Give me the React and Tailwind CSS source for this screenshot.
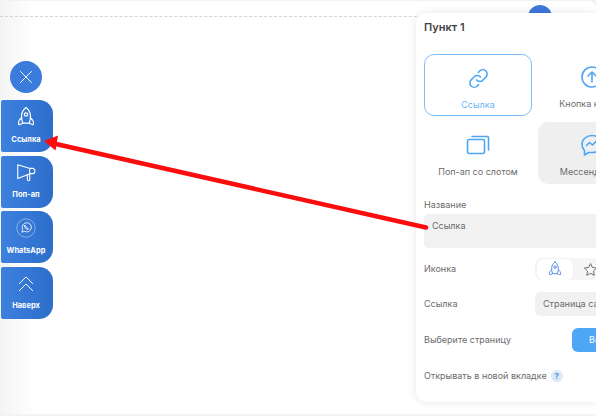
import React from "react";

const Rocket = ({ className }) => (
  <svg viewBox="0 0 24 24" fill="none" stroke="currentColor" strokeWidth="1.2" strokeLinecap="round" strokeLinejoin="round" className={className}>
    <path d="M12 2.500c-3.200 2.400-4.500 5.800-4.500 9 0 2.500.6 4.800 1.300 6.700h6.400c.7-1.900 1.300-4.200 1.300-6.700 0-3.200-1.300-6.600-4.500-9z" />
    <circle cx="12" cy="9.500" r="1.700" />
    <path d="M7.700 12.800c-2 1.300-3.200 3.300-3.200 5.900 0 .8.600 1.200 1.300.8l3-1.300" />
    <path d="M16.300 12.800c2 1.300 3.200 3.300 3.200 5.900 0 .8-.6 1.200-1.300.8l-3-1.300" />
  </svg>
);

const Megaphone = ({ className }) => (
  <svg viewBox="0 0 24 24" fill="none" stroke="currentColor" strokeWidth="1.2" strokeLinecap="round" strokeLinejoin="round" className={className}>
    <path d="M3 3v15l13.500-5.300h2.700a2.500 2.500 0 0 0 2.500-2.500V9.500A2.500 2.500 0 0 0 19.200 7h-2.700L3 3z" />
    <path d="M16.500 7c-1 1.800-1 3.900 0 5.700" />
    <path d="M13.500 14v5.200a1.300 1.300 0 0 0 2.600 0V12.800" />
  </svg>
);

const WhatsApp = ({ className }) => (
  <svg viewBox="0 0 24 24" fill="none" stroke="currentColor" className={className}>
    <circle cx="12" cy="12" r="11" strokeWidth="0.5" />
    <path strokeWidth="1" strokeLinejoin="round" d="M7 17l1-3.400A5.500 5.500 0 1 1 10.300 16L7 17z" />
    <path strokeWidth="1" strokeLinecap="round" d="M10.200 9.500c-.4 1.800 2.200 4.500 4.300 4.300l.6-1.100-1.300-.7-.6.500c-.7-.3-1.200-.8-1.500-1.500l.5-.6-.7-1.300-1.300.4z" />
  </svg>
);

const Chevrons = ({ className }) => (
  <svg viewBox="0 0 24 24" fill="none" stroke="currentColor" strokeWidth="1.200" strokeLinecap="round" strokeLinejoin="round" className={className}>
    <path d="M4 11.500 12 3.500l8 8" />
    <path d="M4 20l8-8 8 8" />
  </svg>
);

const Tile = ({ icon, label }) => (
  <div className="ml-px flex h-[52px] w-[52px] flex-col items-center rounded-r-[14px] rounded-l-[2px] bg-gradient-to-r from-[#3d80dd] to-[#2d6ecb] pr-[2px] text-white">
    <div className="flex h-[32px] w-full items-center justify-center pt-[2px]">{icon}</div>
    <div className="mt-[2.500px] whitespace-nowrap text-[7.500px] font-bold leading-[10px] text-white">{label}</div>
  </div>
);

const Option = ({ icon, label, className }) => (
  <div className={`flex h-[62px] w-[108px] shrink-0 flex-col items-center rounded-[10px] pt-[10px] ${className}`}>
    <div className="flex h-[26px] items-center justify-center">{icon}</div>
    <div className="mt-[8px] whitespace-nowrap text-[9px] leading-[12px]">{label}</div>
  </div>
);

const Row = ({ label, children, className }) => (
  <div className={`flex items-center ${className}`}>
    <div className="w-[111px] shrink-0 text-[9px] text-[#6b6b6b]">{label}</div>
    {children}
  </div>
);

export default function App() {
  return (
    <div className="relative flex h-[416px] w-[596px] overflow-hidden bg-[#f3f3f3] font-['Inter',sans-serif]">
      <div className="relative mb-[2px] mt-[1px] flex w-full rounded-t-[8px] bg-gradient-to-r from-[#f4f4f4] via-white via-[6%] to-white">
        <div className="absolute left-0 right-0 top-[15px] border-t border-dashed border-[#d4d4d4]" />
        <div className="absolute left-[528px] top-[4px] h-[24px] w-[24px] rounded-full bg-[#3d78dc]" />

        <div className="flex w-[416px] shrink-0 flex-col pt-[60px]">
          <div className="ml-[10px] flex h-[32px] w-[32px] items-center justify-center rounded-full bg-[#3b7bdc] text-white">
            <svg viewBox="0 0 16 16" className="h-[16px] w-[16px]" fill="none" stroke="currentColor" strokeWidth="1" strokeLinecap="round">
              <path d="M2.500 2.500l11 11M13.500 2.500l-11 11" />
            </svg>
          </div>
          <div className="mt-[7px] flex flex-col gap-[3.500px]">
            <Tile icon={<Rocket className="h-[24px] w-[24px]" />} label="Ссылка" />
            <Tile icon={<Megaphone className="h-[22px] w-[22px]" />} label="Поп-ап" />
            <Tile icon={<WhatsApp className="h-[20px] w-[20px]" />} label="WhatsApp" />
            <Tile icon={<Chevrons className="h-[20px] w-[20px]" />} label="Наверх" />
          </div>
        </div>

        <div className="relative mt-[12px] h-[389px] w-[200px] overflow-hidden rounded-l-[10px] bg-white pl-[8px] shadow-[0_0_8px_rgba(0,0,0,0.1)]">
          <div className="pt-[7px] text-[11px] font-semibold leading-[14px] text-[#444]">Пункт 1</div>
          <div className="mt-[20px] flex w-[300px] flex-wrap gap-[6px]">
            <Option
              className="border border-[#7cc0fb] text-[#6bb5f5]"
              label="Ссылка"
              icon={
                <svg viewBox="0 0 24 24" fill="none" stroke="#4da6f5" strokeWidth="1.600" strokeLinecap="round" strokeLinejoin="round" className="h-[23px] w-[23px]">
                  <path d="M10 13.500a4.500 4.500 0 0 0 6.400.4l3.300-3.300a4.500 4.500 0 0 0-6.400-6.400l-1.400 1.400" />
                  <path d="M14 10.500a4.500 4.500 0 0 0-6.400-.4l-3.300 3.300a4.500 4.500 0 0 0 6.400 6.400l1.400-1.400" />
                </svg>
              }
            />
            <Option
              className="text-[#6b6b6b]"
              label="Кнопка наверх"
              icon={
                <svg viewBox="0 0 24 24" fill="none" stroke="#4da6f5" strokeWidth="1.600" strokeLinecap="round" strokeLinejoin="round" className="h-[24px] w-[24px]">
                  <circle cx="12" cy="12" r="10" />
                  <path d="M12 17V7.500M8 11l4-4 4 4" />
                </svg>
              }
            />
            <Option
              className="text-[#6b6b6b]"
              label="Поп-ап со слотом"
              icon={
                <svg viewBox="0 0 24 24" fill="none" stroke="#4da6f5" strokeWidth="1.600" strokeLinejoin="round" className="h-[24px] w-[24px]">
                  <rect x="1.500" y="6.500" width="17" height="14" rx="1.500" />
                  <path d="M6 3.500h15.500a1 1 0 0 1 1 1V17" strokeLinecap="round" />
                </svg>
              }
            />
            <Option
              className="bg-[#efefef] text-[#6b6b6b]"
              label="Мессенджеры"
              icon={
                <svg viewBox="0 0 24 24" fill="none" stroke="#4da6f5" strokeWidth="1.600" strokeLinecap="round" strokeLinejoin="round" className="h-[24px] w-[24px]">
                  <path d="M12 2.500c5.500 0 10 3.800 10 8.700s-4.500 8.300-10 8.300H8.500L4.500 22v-4.500C2.900 16 2 13.800 2 11.200 2 6.300 6.500 2.500 12 2.500z" />
                  <path d="M6.500 12.500l3-3 3 2.500 4-4" />
                </svg>
              }
            />
          </div>

          <div className="mt-[15px] text-[9px] leading-[12px] text-[#6b6b6b]">Название</div>
          <div className="mt-[3px] h-[34px] w-[300px] rounded-[5px] bg-[#f1f1f1] pl-[8px] pt-[6px] text-[9px] leading-[12px] text-[#6b6b6b]">Ссылка</div>

          <Row label="Иконка" className="mt-[10px] h-[22px]">
            <div className="flex h-[22px] w-[120px] items-center rounded-[6px] bg-[#f5f5f5] pl-[2px]">
              <div className="flex h-[21px] w-[36px] items-center justify-center rounded-[6px] bg-white text-[#4d85e6] shadow-[0_0_2px_rgba(0,0,0,0.06)]">
                <Rocket className="h-[18px] w-[18px]" />
              </div>
              <svg viewBox="0 0 24 24" fill="none" stroke="#666" strokeWidth="1.500" strokeLinejoin="round" className="ml-[10px] h-[15px] w-[15px]">
                <path d="M12 2.500l3 6.200 6.800 1-5 4.800 1.200 6.800-6-3.200-6 3.200 1.200-6.800-5-4.800 6.800-1z" />
              </svg>
            </div>
          </Row>

          <Row label="Ссылка" className="mt-[12px] h-[24px]">
            <div className="flex h-[24px] w-[120px] items-center whitespace-nowrap rounded-[5px] bg-[#f1f1f1] pl-[8px] text-[9px] text-[#6b6b6b]">Страница сайта</div>
          </Row>

          <Row label="Выберите страницу" className="mt-[12px] h-[24px]">
            <div className="ml-[37px] flex h-[24px] w-[80px] items-center rounded-[6px] bg-[#4ea7f6] pl-[17px] text-[9px] text-white">Выбрать</div>
          </Row>

          <div className="mt-[18px] flex items-center gap-[4px]">
            <span className="whitespace-nowrap text-[9px] leading-[12px] text-[#6b6b6b]">Открывать в новой вкладке</span>
            <span className="flex h-[12px] w-[12px] items-center justify-center rounded-full bg-[#dbe8f6] text-[8px] font-bold text-[#4d8fd8]">?</span>
          </div>
        </div>
      </div>

      <svg className="pointer-events-none absolute left-0 top-0 h-[416px] w-[596px]" viewBox="0 0 596 416">
        <path d="M426 227.500 56 144" stroke="#fb0d0d" strokeWidth="4.500" strokeLinecap="round" fill="none" />
        <path d="M44 141l14-5.500-2.500 15z" fill="#fb0d0d" />
      </svg>
    </div>
  );
}
